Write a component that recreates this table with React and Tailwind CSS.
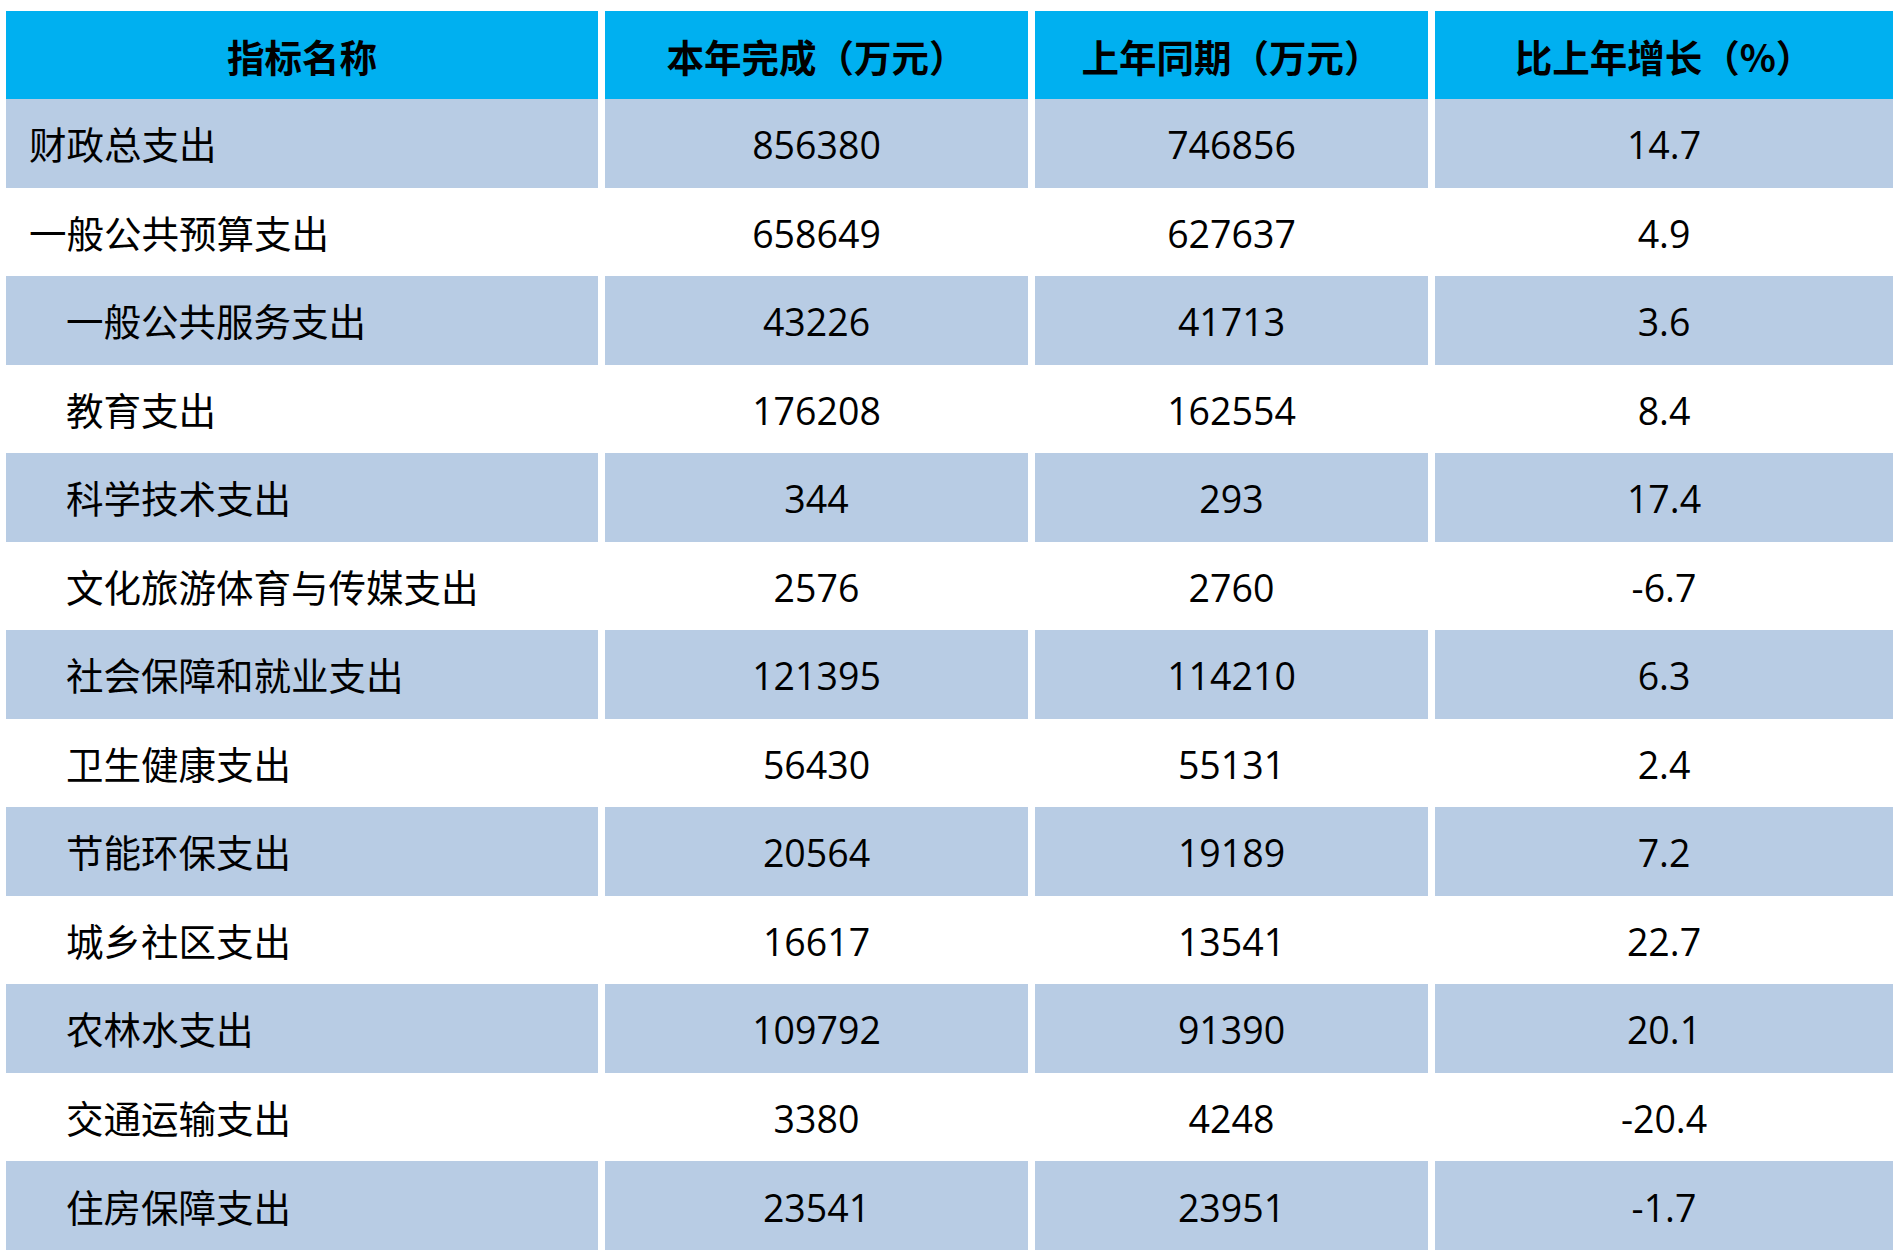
import React from "react";

const rows = [
  ["财政总支出", "856380", "746856", "14.7", false],
  ["一般公共预算支出", "658649", "627637", "4.9", false],
  ["一般公共服务支出", "43226", "41713", "3.6", true],
  ["教育支出", "176208", "162554", "8.4", true],
  ["科学技术支出", "344", "293", "17.4", true],
  ["文化旅游体育与传媒支出", "2576", "2760", "-6.7", true],
  ["社会保障和就业支出", "121395", "114210", "6.3", true],
  ["卫生健康支出", "56430", "55131", "2.4", true],
  ["节能环保支出", "20564", "19189", "7.2", true],
  ["城乡社区支出", "16617", "13541", "22.7", true],
  ["农林水支出", "109792", "91390", "20.1", true],
  ["交通运输支出", "3380", "4248", "-20.4", true],
  ["住房保障支出", "23541", "23951", "-1.7", true],
];

const headers = ["指标名称", "本年完成（万元）", "上年同期（万元）", "比上年增长（%）"];

export default function App() {
  return (
    <div
      className="w-[1893px] h-[1250px] bg-white overflow-hidden pl-[6px] pt-[11px] text-black"
      style={{ fontFamily: '"Open Sans", "Noto Sans CJK SC", sans-serif' }}
    >
      <div className="grid grid-cols-[592px_423px_393px_458px] grid-rows-[88px_repeat(13,88.54px)] gap-x-[7px]">
        {headers.map((h) => (
          <div
            key={h}
            className="bg-[#00b0f0] flex items-center justify-center pt-[3px] text-[37.5px] font-bold"
            style={{ fontFamily: '"Noto Sans CJK SC", sans-serif' }}
          >
            {h}
          </div>
        ))}
        {rows.map(([name, a, b, c, indent], i) => {
          const bg = i % 2 === 0 ? "bg-[#b8cce4]" : "bg-white";
          return (
            <React.Fragment key={name}>
              <div
                className={`${bg} flex items-center pt-[4px] text-[37.5px] ${indent ? "pl-[60px]" : "pl-[23px]"}`}
              >
                {name}
              </div>
              <div className={`${bg} flex items-center justify-center pt-[4px] text-[37.5px]`}>{a}</div>
              <div className={`${bg} flex items-center justify-center pt-[4px] text-[37.5px]`}>{b}</div>
              <div className={`${bg} flex items-center justify-center pt-[4px] text-[37.5px]`}>{c}</div>
            </React.Fragment>
          );
        })}
      </div>
    </div>
  );
}
